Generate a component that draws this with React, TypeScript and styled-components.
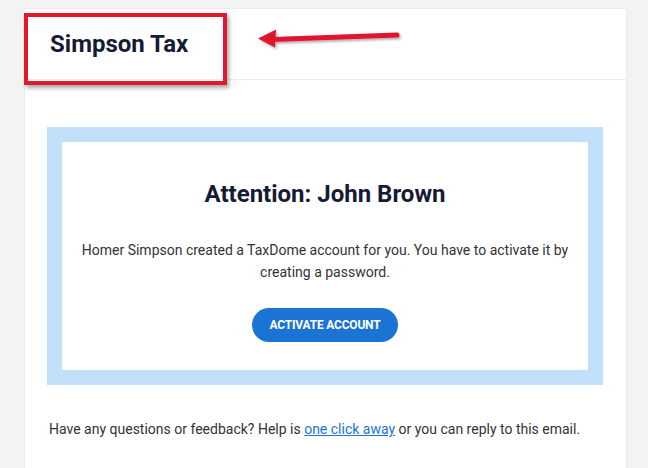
import React from "react";
import styled, { createGlobalStyle } from "styled-components";

const Global = createGlobalStyle`
  html, body { margin: 0; padding: 0; }
  body {
    background: #f3f3f3;
    font-family: Roboto, "Liberation Sans", Arial, sans-serif;
    width: 648px;
    height: 468px;
    overflow: hidden;
  }
`;

const Page = styled.div`
  position: relative;
  padding: 8px 0 0 24px;
`;

const Card = styled.div`
  width: 601px;
  background: #ffffff;
  border: 1px solid #ebebeb;
  border-bottom: none;
  min-height: 470px;
`;

const Header = styled.div`
  height: 70px;
  border-bottom: 1px solid #ececec;
  display: flex;
  align-items: center;
  padding-left: 25px;
`;

const Brand = styled.h1`
  margin: 0;
  font-size: 24px;
  font-weight: 700;
  color: #161b33;
  letter-spacing: 0;
`;

const Body = styled.div`
  padding: 47px 23px 0 22px;
`;

const Frame = styled.div`
  background: #c3e0fa;
  padding: 15px;
`;

const Inner = styled.div`
  background: #ffffff;
  padding: 36px 4px 28px;
  display: flex;
  flex-direction: column;
  align-items: center;
  text-align: center;
`;

const Title = styled.h2`
  margin: 0 0 29px;
  font-size: 24px;
  font-weight: 700;
  color: #161b33;
  line-height: 32px;
`;

const Text = styled.p`
  margin: 0 0 25px;
  font-size: 14px;
  line-height: 22px;
  color: #333333;
  white-space: nowrap;
`;

const Button = styled.a`
  display: inline-flex;
  align-items: center;
  justify-content: center;
  height: 34px;
  padding: 0 18px;
  border-radius: 17px;
  background: #1b73d3;
  color: #ffffff;
  font-size: 12px;
  font-weight: 700;
  letter-spacing: -0.2px;
  text-decoration: none;
  text-transform: uppercase;
`;

const Footer = styled.p`
  margin: 34px 0 0 2px;
  font-size: 14px;
  line-height: 20px;
  color: #333333;
`;

const Link = styled.a`
  color: #1b73d3;
  text-decoration: underline;
`;

const Highlight = styled.div`
  position: absolute;
  left: 24px;
  top: 13px;
  width: 195px;
  height: 64px;
  border: 4px solid #e0192f;
  box-shadow: 2px 3px 4px rgba(0, 0, 0, 0.35);
  pointer-events: none;
`;

const Arrow = styled.svg`
  position: absolute;
  left: 250px;
  top: 24px;
  overflow: visible;
`;

export default function App() {
  return (
    <>
      <Global />
      <Page>
        <Card>
          <Header>
            <Brand>Simpson Tax</Brand>
          </Header>
          <Body>
            <Frame>
              <Inner>
                <Title>Attention: John Brown</Title>
                <Text>
                  Homer Simpson created a TaxDome account for you. You have to activate it by
                  <br />
                  creating a password.
                </Text>
                <Button href="#">Activate account</Button>
              </Inner>
            </Frame>
            <Footer>
              Have any questions or feedback? Help is <Link href="#">one click away</Link> or you
              can reply to this email.
            </Footer>
          </Body>
        </Card>
        <Highlight />
        <Arrow width="160" height="30" viewBox="0 0 160 30">
          <defs>
            <filter id="sh" x="-10%" y="-50%" width="130%" height="200%">
              <feDropShadow dx="1.5" dy="2" stdDeviation="1.2" floodColor="#000" floodOpacity="0.3" />
            </filter>
          </defs>
          <g filter="url(#sh)">
            <path d="M22 15.5 L147 11" stroke="#e0192f" strokeWidth="5" strokeLinecap="round" fill="none" />
            <path d="M8 14.5 L26 5.5 L25 23.5 Z" fill="#e0192f" />
          </g>
        </Arrow>
      </Page>
    </>
  );
}
